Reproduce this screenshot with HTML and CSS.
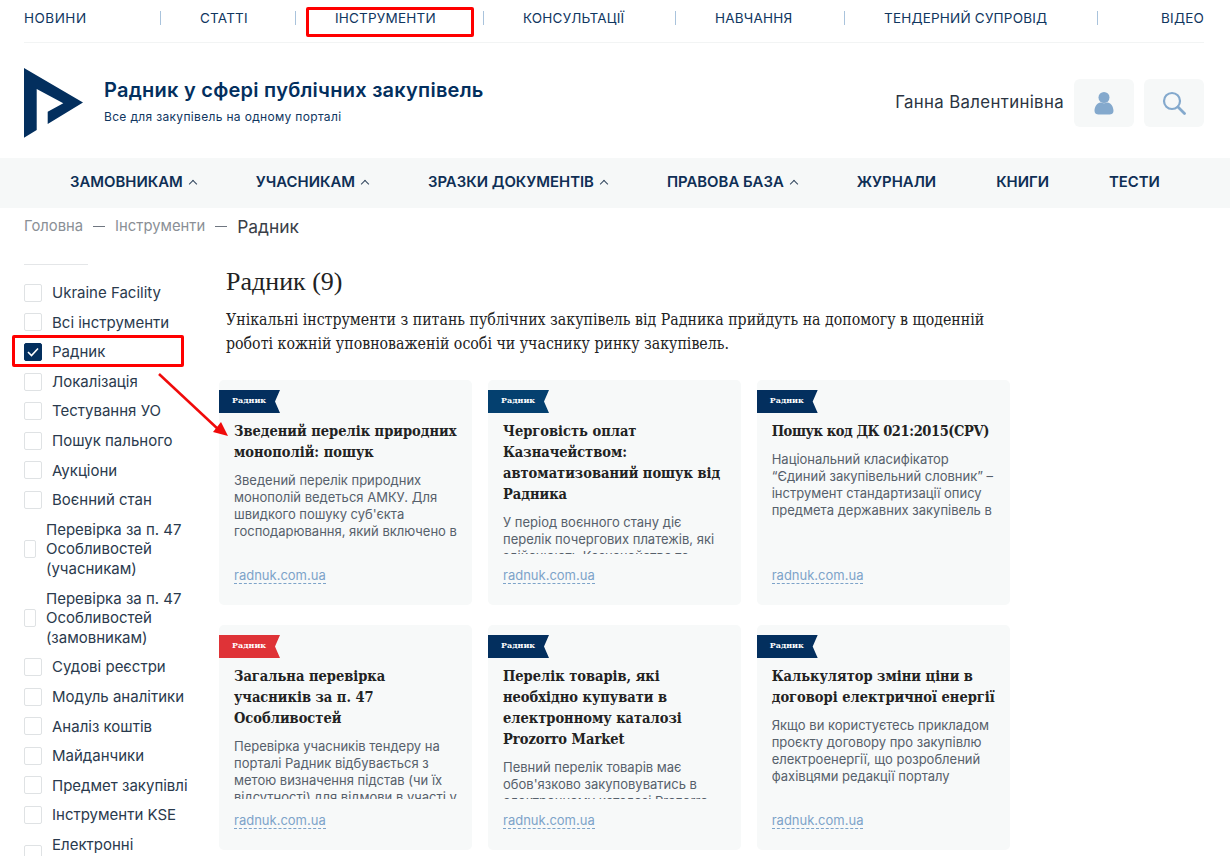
FILE: index.html
```html
<!DOCTYPE html>
<html lang="uk">
<head>
<meta charset="utf-8">
<title>Радник</title>
<link rel="stylesheet" href="styles.css">
</head>
<body>
<div class="page">
  <nav class="topnav">
    <a class="topnav-item first">НОВИНИ</a>
    <a class="topnav-item">СТАТТІ</a>
    <a class="topnav-item">ІНСТРУМЕНТИ</a>
    <a class="topnav-item">КОНСУЛЬТАЦІЇ</a>
    <a class="topnav-item">НАВЧАННЯ</a>
    <a class="topnav-item">ТЕНДЕРНИЙ СУПРОВІД</a>
    <a class="topnav-item last">ВІДЕО</a>
  </nav>

  <header class="header">
    <svg class="logo" width="60" height="70" viewBox="0 0 60 70"><path fill="#032f5e" d="M0 0L59 34.500L23.700 56V43.700L39.300 35.300L12.700 21V62L0 69.700Z"/></svg>
    <div class="brand">
      <div class="brand-title">Радник у сфері публічних закупівель</div>
      <div class="brand-sub">Все для закупівель на одному порталі</div>
    </div>
    <div class="user-name">Ганна Валентинівна</div>
    <button class="icon-btn">
      <svg width="20" height="24" viewBox="0 0 20 24"><circle cx="10" cy="6.500" r="5.500" fill="#84a9cd"/><path fill="#84a9cd" d="M0.500 20c0-5 3-8 6-8.500c2 1 5 1 7 0c3 .5 6 3.500 6 8.500c0 2.500-2 3.500-4 3.500H4.500c-2 0-4-1-4-3.500Z"/></svg>
    </button>
    <button class="icon-btn">
      <svg width="24" height="24" viewBox="0 0 24 24" fill="none" stroke="#84a9cd"><circle cx="10" cy="10" r="8" stroke-width="2.200"/><path d="M16 16L22.500 22.500" stroke-width="2.800" stroke-linecap="round"/></svg>
    </button>
  </header>

  <nav class="mainnav">
    <a class="mainnav-item caret">ЗАМОВНИКАМ</a>
    <a class="mainnav-item caret">УЧАСНИКАМ</a>
    <a class="mainnav-item caret">ЗРАЗКИ ДОКУМЕНТІВ</a>
    <a class="mainnav-item caret">ПРАВОВА БАЗА</a>
    <a class="mainnav-item">ЖУРНАЛИ</a>
    <a class="mainnav-item">КНИГИ</a>
    <a class="mainnav-item">ТЕСТИ</a>
  </nav>

  <div class="crumbs">
    <span>Головна</span><span class="dash"></span><span>Інструменти</span><span class="dash"></span><span class="current">Радник</span>
  </div>

  <div class="content">
    <aside class="sidebar">
      <div class="side-rule"></div>
      <label class="opt"><span class="box"></span>Ukraine Facility</label>
      <label class="opt"><span class="box"></span>Всі інструменти</label>
      <label class="opt"><span class="box checked"><svg width="12" height="10" viewBox="0 0 12 10" fill="none" stroke="#fff" stroke-width="1.600"><path d="M1 5L4.500 8.500L11 1.500"/></svg></span>Радник</label>
      <label class="opt"><span class="box"></span>Локалізація</label>
      <label class="opt"><span class="box"></span>Тестування УО</label>
      <label class="opt"><span class="box"></span>Пошук пального</label>
      <label class="opt"><span class="box"></span>Аукціони</label>
      <label class="opt"><span class="box"></span>Воєнний стан</label>
      <label class="opt squeezed"><span class="box"></span>Перевірка за п. 47 Особливостей (учасникам)</label>
      <label class="opt squeezed"><span class="box"></span>Перевірка за п. 47 Особливостей (замовникам)</label>
      <label class="opt"><span class="box"></span>Судові реєстри</label>
      <label class="opt"><span class="box"></span>Модуль аналітики</label>
      <label class="opt"><span class="box"></span>Аналіз коштів</label>
      <label class="opt"><span class="box"></span>Майданчики</label>
      <label class="opt"><span class="box"></span>Предмет закупівлі</label>
      <label class="opt"><span class="box"></span>Інструменти KSE</label>
      <label class="opt"><span class="box"></span>Електронні<br>каталоги</label>
    </aside>

    <main class="main">
      <h1 class="title">Радник (9)</h1>
      <p class="intro">Унікальні інструменти з питань публічних закупівель від Радника прийдуть на допомогу в щоденній<br>роботі кожній уповноваженій особі чи учаснику ринку закупівель.</p>
      <div class="cards">
        <article class="card">
          <div class="ribbon">Радник</div>
          <h2 class="card-title">Зведений перелік природних монополій: пошук</h2>
          <p class="card-text">Зведений перелік природних монополій ведеться АМКУ. Для швидкого пошуку суб'єкта господарювання, який включено в</p>
          <a class="card-link">radnuk.com.ua</a>
        </article>
        <article class="card">
          <div class="ribbon alt">Радник</div>
          <h2 class="card-title">Черговість оплат Казначейством: автоматизований пошук від Радника</h2>
          <p class="card-text">У період воєнного стану діє перелік почергових платежів, які здійснюють Казначейство та банки під час</p>
          <a class="card-link">radnuk.com.ua</a>
        </article>
        <article class="card">
          <div class="ribbon">Радник</div>
          <h2 class="card-title tight">Пошук код ДК 021:2015(CPV)</h2>
          <p class="card-text">Національний класифікатор “Єдиний закупівельний словник” – інструмент стандартизації опису предмета державних закупівель в</p>
          <a class="card-link">radnuk.com.ua</a>
        </article>
        <article class="card">
          <div class="ribbon red">Радник</div>
          <h2 class="card-title">Загальна перевірка учасників за п. 47 Особливостей</h2>
          <p class="card-text">Перевірка учасників тендеру на порталі Радник відбувається з метою визначення підстав (чи їх відсутності) для відмови в участі у</p>
          <a class="card-link">radnuk.com.ua</a>
        </article>
        <article class="card">
          <div class="ribbon">Радник</div>
          <h2 class="card-title">Перелік товарів, які необхідно купувати в електронному каталозі Prozorro Market</h2>
          <p class="card-text">Певний перелік товарів має обов'язково закуповуватись в електронному каталозі Prozorro</p>
          <a class="card-link">radnuk.com.ua</a>
        </article>
        <article class="card">
          <div class="ribbon">Радник</div>
          <h2 class="card-title">Калькулятор зміни ціни в договорі електричної енергії</h2>
          <p class="card-text">Якщо ви користуєтесь прикладом проєкту договору про закупівлю електроенергії, що розроблений фахівцями редакції порталу</p>
          <a class="card-link">radnuk.com.ua</a>
        </article>
      </div>
    </main>
  </div>

  <div class="mark mark-nav"></div>
  <div class="mark mark-side"></div>
  <svg class="arrow" width="80" height="74" viewBox="0 0 80 74"><path d="M2 2L62 58" stroke="#f00a0a" stroke-width="2.500"/><path fill="#f00a0a" d="M71 64L56 60L64 50Z"/></svg>
</div>
</body>
</html>
```

FILE: styles.css
```css
* { box-sizing: border-box; }
html, body { margin: 0; padding: 0; background: #fff; }
body { font-family: Inter, "Noto Sans", sans-serif; color: #0f2f55; }
.page { position: relative; width: 1230px; height: 856px; overflow: hidden; }

.topnav {
  display: grid;
  grid-template-columns: 137px 135px 188px 192px 169px 253px 106px;
  height: 43px;
  margin: 0 26px 0 24px;
  width: 1180px;
  align-items: center;
  border-bottom: 1px solid #f2f4f4;
  padding-bottom: 6px;
}
.topnav-item {
  font-size: 13.500px;
  line-height: 14px;
  letter-spacing: 0.2px;
  color: #10365f;
  padding-left: 39px;
  border-right: 1px solid #a9c3dc;
  white-space: nowrap;
}
.topnav-item.first { padding-left: 0; letter-spacing: 0.5px; }
.topnav-item.last { padding-left: 0; border-right: 0; text-align: right; }

.header { display: flex; align-items: center; height: 115px; padding: 5px 26px 0 24px; }
.logo { flex: none; }
.brand { margin: 0 0 3px 20px; flex: 1; }
.brand-title { font-size: 20px; font-weight: 600; line-height: 24px; letter-spacing: 0.25px; color: #032f5e; }
.brand-sub { font-size: 12px; line-height: 16px; margin-top: 7px; letter-spacing: 0.33px; color: #10365f; }
.user-name { font-size: 16.800px; color: #2b3442; letter-spacing: 0.35px; margin: 0 10px 2px 0; }
.icon-btn {
  width: 60px; height: 48px; border: 0; border-radius: 6px; background: #f6f8f8;
  display: flex; align-items: center; justify-content: center; padding: 0; margin-left: 10px;
}
.icon-btn:first-of-type { margin-left: 0; }

.mainnav { display: flex; justify-content: center; gap: 60px; height: 50px; align-items: center; background: #f6f8f8; padding-bottom: 2px; }
.mainnav-item { font-size: 14.900px; font-weight: 600; color: #0f2f55; white-space: nowrap; display: flex; align-items: center; }
.caret::after {
  content: ""; width: 5px; height: 5px; margin-left: 7px; margin-top: 3px;
  border-left: 1px solid #33475f; border-top: 1px solid #33475f; transform: rotate(45deg);
}

.crumbs { display: flex; align-items: center; height: 36px; padding-left: 24px; font-size: 14.800px; color: #8a8f96; }
.dash { width: 12px; height: 1px; background: #6f7680; margin: 0 10px; }
.current { font-size: 17.400px; color: #3a4048; }

.content { display: flex; align-items: flex-start; }
.sidebar { flex: none; width: 219px; padding: 20px 29px 0 24px; display: flex; flex-direction: column; }
.side-rule { width: 64px; height: 1px; background: #e4e6e8; margin-bottom: 18px; }
.opt { display: flex; align-items: center; gap: 10px; font-size: 15px; line-height: 19.600px; margin-bottom: 10px; color: #2a3a4d; white-space: nowrap; }
.box { flex: none; width: 18px; height: 18px; border: 1px solid #dfe2e4; border-radius: 2px; display: flex; align-items: center; justify-content: center; background: #fff; }
.box.checked { background: #032f5e; border-color: #032f5e; }
.squeezed { white-space: normal; }
.squeezed .box { width: 12px; }

.main { flex: none; width: 790px; padding-top: 20px; }
.title { font-family: "Liberation Serif", serif; font-weight: 400; font-size: 26px; line-height: 36px; color: #222; margin: 0 0 0 7px; }
.intro { font-family: "DejaVu Serif", serif; font-stretch: condensed; font-size: 15.750px; line-height: 23.500px; color: #222; margin: 8px 0 25px 7px; white-space: nowrap; }

.cards { display: grid; grid-template-columns: 253px 252.700px 253px; column-gap: 16px; row-gap: 20px; }
.card { height: 225px; background: #f7f9f9; border-radius: 5px; display: flex; flex-direction: column; padding: 10px 15px 0; position: relative; }
.ribbon {
  width: 61px; height: 23px; margin-left: -15px; flex: none;
  background: #032f5e; color: #fff;
  font-family: "DejaVu Serif", serif; font-weight: 700; font-size: 8px; line-height: 21px; padding-left: 13px;
  clip-path: polygon(0 0, 100% 0, 56px 50%, 100% 100%, 0 100%);
}
.ribbon.alt { background: #04406f; }
.ribbon.red { background: #df3337; }
.card-title { font-family: "DejaVu Serif", serif; font-stretch: condensed; font-weight: 700; font-size: 14.500px; line-height: 21px; color: #222; margin: 7px -6px 0 0; flex: none; }
.card-title.tight { letter-spacing: -0.4px; }
.card-text { font-size: 13px; line-height: 17px; color: #56606b; margin: 10px 0 0; flex: 1 1 0; min-height: 0; overflow: hidden; }
.card-link { flex: none; align-self: flex-start; font-size: 13px; line-height: 16px; color: #7da3c9; border-bottom: 1px dashed #7da3c9; margin: 13px 0 21px; }

.mark { position: absolute; border: 3px solid #f00; border-radius: 2px; }
.mark-nav { left: 306px; top: 7px; width: 168px; height: 30px; }
.mark-side { left: 12px; top: 335px; width: 172px; height: 32px; }
.arrow { position: absolute; left: 157px; top: 372px; }
```
